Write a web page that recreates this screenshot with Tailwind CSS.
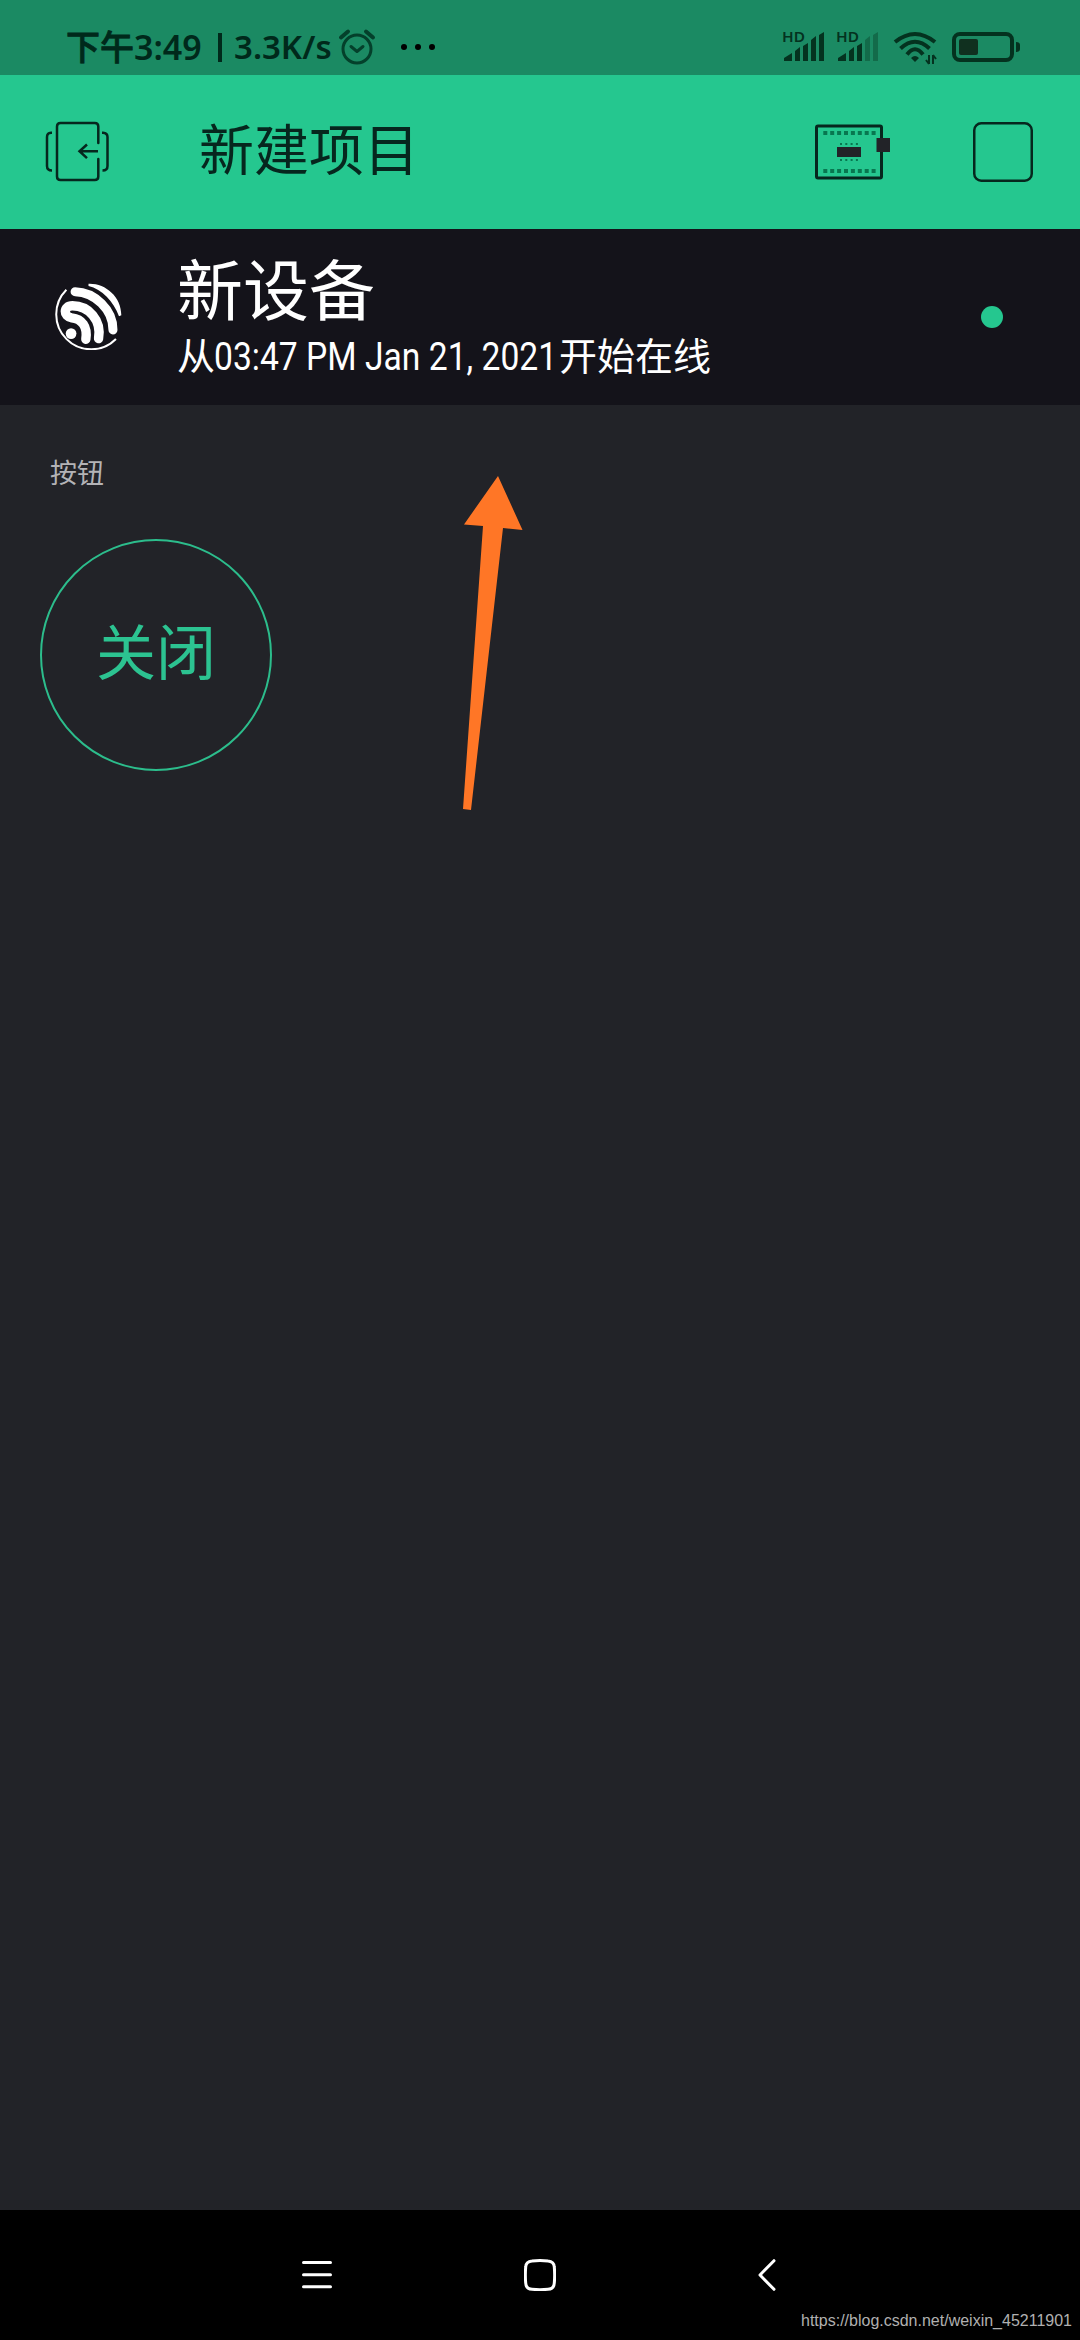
<!DOCTYPE html>
<html lang="zh-CN">
<head>
  <meta charset="UTF-8">
  <meta name="viewport" content="width=device-width, initial-scale=1.0">
  <title>新建项目</title>
  <script src="https://cdn.jsdelivr.net/npm/@tailwindcss/browser@4"></script>
</head>
<body class="bg-[#222328] font-['Roboto','Noto_Sans_CJK_SC',sans-serif]">
  <div class="relative w-[1080px] h-[2340px] flex flex-col overflow-hidden">

    <!-- Status bar -->
    <div class="h-[75px] bg-[#1b8a63] flex items-start text-[#00291b] whitespace-nowrap">
      <div class="shrink-0 flex items-center h-[50px] mt-[22px] ml-[66px] w-[270px] font-semibold font-['Noto_Sans','Noto_Sans_CJK_SC',sans-serif]">
        <span class="w-[68px] text-[34px] font-medium [-webkit-text-stroke:0.8px_#00291b]">下午</span>
        <span class="w-[72px] text-[34px]">3:49</span>
        <span class="w-[4px] h-[29px] bg-[#00291b] ml-[12px]"></span>
        <span class="text-[33px] ml-[12px]">3.3K/s</span>
      </div>
      <svg class="shrink-0 ml-[2px] mt-[28px]" width="38" height="38" viewBox="0 0 38 38" fill="none" stroke="#04402b" stroke-width="3" stroke-linecap="round" stroke-linejoin="round">
        <circle cx="19" cy="21" r="14"/>
        <path d="M13 18.500l6 5 6-5"/>
        <path d="M3 9.500l7-6M35 9.500l-7-6" stroke-width="4"/>
      </svg>
      <div class="shrink-0 flex gap-2 ml-[25px] mt-[44px]">
        <span class="size-[6px] rounded-full bg-black"></span>
        <span class="size-[6px] rounded-full bg-black"></span>
        <span class="size-[6px] rounded-full bg-black"></span>
      </div>
      <svg class="shrink-0 ml-[343px] mt-[18px]" width="254" height="50" viewBox="-4 -10 254 50" fill="#04321f">
        <g font-family="Noto Sans" font-size="15" font-weight="600">
          <text x="0" y="14" textLength="23" lengthAdjust="spacingAndGlyphs">HD</text>
          <text x="54" y="14" textLength="23" lengthAdjust="spacingAndGlyphs">HD</text>
        </g>
        <path id="bars" d="M2 33v-3l8-5v8zM13 33v-10l5-4v14zM21 33v-15l5-3v18z"/>
        <path d="M29 33V12l5-4v25zM37 33V7l5-3v29z"/>
        <use href="#bars" x="54"/>
        <path d="M83 33V12l5-4v25zM91 33V7l5-3v29z" fill="#136b4a"/>
        <g fill="none" stroke="#04321f" stroke-width="4">
          <path d="M113 14Q133-2 153 14M118.500 20.500Q133 7 147.500 20.500M125 26.500Q133 16 141 26.500"/>
          <rect x="172" y="6" width="58" height="26" rx="6"/>
        </g>
        <path d="M129 30q4-4 8 0l-4 4zM234 14q4 0 4 3v4q0 3-4 3z"/>
        <path d="M147 27v9M144 32l3 4M151 36v-9M154 31l-3-4" stroke="#04321f" stroke-width="2"/>
        <rect x="177" y="11" width="19" height="16" rx="2" fill="#10301f"/>
      </svg>
    </div>

    <!-- Toolbar -->
    <div class="h-[154px] bg-[#25c78f] flex items-start">
      <svg class="ml-[45px] mt-[46px]" width="65" height="62" viewBox="0 0 65 62" fill="none" stroke="#06271e" stroke-width="2.500">
        <path d="M53.300 22V5.500q0-3.500-3.500-3.500H15.500Q12 2 12 5.500v50q0 3.500 3.500 3.500h34.300q3.500 0 3.500-3.500V38" stroke-linecap="round"/>
        <path d="M7 11.700h-1Q2 12 2 16v29q0 4.500 5 4.500M57 11.700h1q4.500.300 4.500 4.300v29q0 4.500-5 4.500"/>
        <path d="M53 30.200H35M42 23.500l-7.500 6.700 7.500 7"/>
      </svg>
      <h1 class="ml-[89px] mt-[36px] w-[240px] text-[55px] leading-[80px] text-[#06271e]">新建项目</h1>
      <svg class="ml-[375px] mt-[48px]" width="78" height="58" viewBox="0 0 78 58">
        <rect x="2.500" y="3" width="65" height="52" rx="1.500" fill="none" stroke="#06271e" stroke-width="3"/>
        <path d="M9.300 10h54M9.300 48h54" stroke="#087750" stroke-width="4" stroke-dasharray="4 2.900"/>
        <path d="M26 21h20M26 37h20" stroke="#087750" stroke-width="2" stroke-dasharray="2 3.300"/>
        <path d="M23 24h24v10H23zM62.500 15h13.500v14H62.500z" fill="#222328"/>
      </svg>
      <svg class="ml-[81px] mt-[47px]" width="60" height="60" viewBox="0 0 60 60" fill="none" stroke="#06271e" stroke-width="2.500">
        <rect x="1.250" y="1.250" width="57.500" height="57.500" rx="7"/>
      </svg>
    </div>

    <!-- Device -->
    <div class="h-[176px] bg-[#14131a] flex items-start text-white">
      <svg class="ml-[55px] mt-[54px]" width="67" height="67" viewBox="0 0 200 200" fill="none" stroke="white">
        <path d="M34 20A97 97 0 1 0 182 167" stroke-width="6"/>
        <path d="M100 2C150 0 198 40 198 96l-7 3C175 55 140 18 100 9z" fill="white" stroke="none"/>
        <path d="M60 26C118 27 174 80 173 140" stroke-width="27" stroke-linecap="round"/>
        <path d="M130 166C140 110 100 68 52 68C24 68 24 100 50 104C80 107 98 130 92 168" stroke-width="28" stroke-linecap="round"/>
        <circle cx="48" cy="151" r="16" fill="white" stroke="none"/>
      </svg>
      <div class="ml-[55px] mt-[19px] w-[700px] whitespace-nowrap">
        <div class="text-[66px] leading-[90px]">新设备</div>
        <div class="text-[38px] leading-[50px] -mt-[6px]">从<span class="inline-block -ml-[1px] w-[345px] origin-left scale-x-[0.885]">03:47 PM Jan 21, 2021</span>开始在线</div>
      </div>
      <span class="ml-[104px] mt-[77px] size-[22px] rounded-full bg-[#25c78f]"></span>
    </div>

    <!-- Widgets -->
    <div class="flex-1 px-[40px]">
      <div class="mt-[49px] ml-[10px] text-[27px] leading-[40px] text-[#b3b3b6]">按钮</div>
      <button class="mt-[45px] size-[232px] rounded-full border-2 border-[#2cbd8c] flex items-center justify-center text-[60px] leading-[80px] text-[#2cc391]">关闭</button>
    </div>

    <!-- Navigation bar -->
    <div class="h-[130px] bg-black flex items-start">
      <svg class="ml-[302px] mt-[49px]" width="30" height="32" viewBox="0 0 30 32" stroke="white" stroke-width="3" stroke-linecap="round">
        <path d="M1.500 3.500h27M1.500 15.700h27M1.500 27.700h27"/>
      </svg>
      <svg class="ml-[192px] mt-[49px]" width="32" height="32" viewBox="0 0 32 32" fill="none" stroke="white" stroke-width="3">
        <path d="M8 2Q16 1 24 2Q30 2.500 30.300 8Q31 16 30.300 24Q30 30 24 30.300Q16 31 8 30.300Q2 30 1.700 24Q1 16 1.700 8Q2 2.500 8 2z"/>
      </svg>
      <svg class="ml-[202px] mt-[49px]" width="18" height="32" viewBox="0 0 18 32" fill="none" stroke="white" stroke-width="3" stroke-linecap="round" stroke-linejoin="round">
        <path d="M16 1.700L2 16l14 14.300"/>
      </svg>
      <div class="ml-[25px] mt-[101px] text-[16px] leading-[20px] text-[#b0b0b0] font-['Liberation_Sans',sans-serif]">https://blog.csdn.net/weixin_45211901</div>
    </div>

    <!-- Pointer arrow over the canvas -->
    <svg class="absolute left-[460px] top-[474px]" width="66" height="340" viewBox="460 474 66 340" fill="#ff7626">
      <path d="M498 476L464 524.500l19 1.500-20 283 8 1 32-282 19.500 2z"/>
    </svg>
  </div>
</body>
</html>
